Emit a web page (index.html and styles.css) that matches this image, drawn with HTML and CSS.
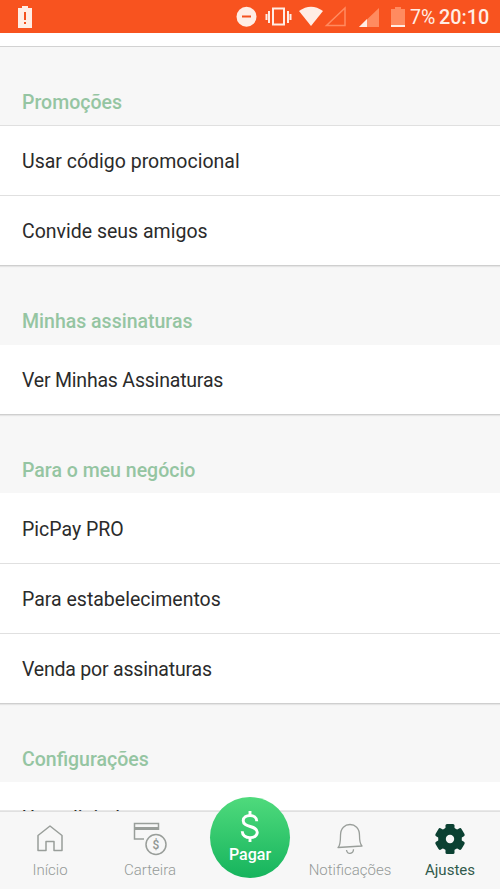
FILE: index.html
```html
<!DOCTYPE html>
<html lang="pt-BR">
<head>
<meta charset="utf-8">
<title>Ajustes</title>
<link rel="stylesheet" href="styles.css">
</head>
<body>
<div class="app">
  <header class="status">
    <svg class="alert" width="16" height="24" viewBox="0 0 16 24"><path fill="#ffede5" d="M1 3h4V1h6v2h4v20H1z"/><path stroke="#f4511e" stroke-width="2" d="M8 7v8M8 17v2"/></svg>
    <svg class="icons" width="175" height="34" viewBox="0 0 175 34">
      <circle cx="11.500" cy="16.700" r="10" fill="#ffede5"/><path d="M7 16.500h9" stroke="#f4511e" stroke-width="2"/>
      <g fill="none" stroke="#ffede5" stroke-width="2"><rect x="38" y="8.500" width="11" height="16"/><path d="M34 11v12M53 11v12M31.500 14v6M55.500 14v6"/></g>
      <path fill="#ffede5" d="M64 11q12-8.500 24 0L76 26z"/>
      <path fill="none" stroke="#ff8b60" stroke-width="1.500" d="M91.500 25.500H110V8z"/>
      <path fill="#ff8b60" d="M124 27h20V8z"/><path fill="#ffede5" d="M124 27h8v-8z"/>
      <path fill="#ff8b60" d="M156 9h4V7h6v2h4v17h-14z"/><path fill="#ffede5" d="M156 25h14v2h-14z"/>
    </svg>
    <span class="percent">7%</span><span class="time">20:10</span>
  </header>
  <main class="list">
    <div class="tail"></div>
    <h2>Promoções</h2>
    <ul class="lined"><li>Usar código promocional</li><li>Convide seus amigos</li></ul>
    <h2 class="tall">Minhas assinaturas</h2>
    <ul><li class="tight">Ver Minhas Assinaturas</li></ul>
    <h2>Para o meu negócio</h2>
    <ul><li class="lead">PicPay PRO</li><li>Para estabelecimentos</li><li class="tight">Venda por assinaturas</li></ul>
    <h2>Configurações</h2>
    <ul><li class="last">Usar digital</li></ul>
  </main>
  <nav class="nav">
    <a><svg width="40" height="36" viewBox="0 0 40 36"><path fill="none" stroke="#999e9a" stroke-width="1.500" stroke-linejoin="round" d="M8 14.500 20 5l12 9.500V29.500h-8v-9h-8v9H8z"/></svg><span>Início</span></a>
    <a><svg width="40" height="36" viewBox="0 0 40 36"><g fill="none" stroke="#999e9a" stroke-width="1.500"><path d="M14 18H4.500V2.500h24V9"/><path stroke-width="3" d="M4.500 7.500h24"/><circle cx="26" cy="23.500" r="10"/></g><text x="26" y="28" class="coin">$</text></svg><span>Carteira</span></a>
    <a class="pay"><span class="disc"><svg class="dollar" width="24" height="34" viewBox="0 0 24 34"><path fill="none" stroke="#fff" stroke-width="3" d="M12 1v5M12 28v5M19 11.500C19 3.500 5 4 5 11c0 7.500 14.500 4.500 14.500 12 0 7.500-15.500 7.500-15.500-1"/></svg><span>Pagar</span></span></a>
    <a><svg width="40" height="36" viewBox="0 0 40 36"><path fill="none" stroke="#999e9a" stroke-width="1.300" stroke-linejoin="round" d="M8 26.500q2.500-2 2.500-12C10.500 7 15 3.500 20 3.500s9.500 3.500 9.500 11c0 6.500.5 8.500 2.500 10.500zM16.500 29c.5 5 7 4 7-.8"/></svg><span>Notificações</span></a>
    <a class="active"><svg width="40" height="36" viewBox="0 0 40 36"><g fill="#0b4132"><circle cx="20" cy="18" r="11.800"/><g id="tooth"><rect x="15.500" y="3" width="9" height="30" rx="1.500"/></g><use href="#tooth" transform="rotate(60 20 18)"/><use href="#tooth" transform="rotate(120 20 18)"/></g><circle cx="20" cy="18" r="4.200" fill="#f7f7f7"/></svg><span>Ajustes</span></a>
  </nav>
</div>
</body>
</html>
```
FILE: styles.css
```css
* { box-sizing: border-box; }
body { margin: 0; font-family: Roboto, "Liberation Sans", sans-serif; }
.app { width: 500px; height: 889px; display: flex; flex-direction: column; overflow: hidden; background: #f7f7f7; }
.status { height: 33px; flex: none; display: flex; align-items: center; background: #f8531f; color: #ffede5; font-size: 20px; }
.alert { margin-left: 17px; }
.icons { margin-left: 202px; flex: none; }
.percent { width: 29px; font-size: 19.5px; padding-top: 1px; }
.time { font-weight: 500; font-size: 19.8px; padding-top: 1px; }
.list { flex: 1; min-height: 0; overflow: hidden; }
.tail { height: 14px; background: #fff; border-bottom: 1px solid #d2d2d2; }
h2 { margin: 0; height: 78px; padding: 44px 22px 0; font-size: 19.5px; line-height: 24px; font-weight: 500; color: #95c5a2; }
.tall { height: 79px; }
ul { margin: 0; padding: 0; list-style: none; background: #fff; border-bottom: 1px solid #cfcfcf; box-shadow: 0 1px 1px #e5e5e5; }
li { height: 70px; padding: 0 22px; line-height: 72px; font-size: 19.5px; color: #2b2b2b; }
li:only-child { height: 69px; line-height: 71px; }
.lined li, li + li { border-top: 1px solid #e0e0e0; }
li + li { line-height: 71px; }
.lead { line-height: 74px; }
li.last:only-child { line-height: 73px; }
.tight { letter-spacing: -0.2px; }
.nav { height: 79px; flex: none; position: relative; margin-top: -1px; display: grid; grid-template-columns: repeat(5, 100px); background: #f7f7f7; background-clip: padding-box; border-top: 2px solid rgba(0, 0, 0, 0.09); }
.nav a { display: flex; flex-direction: column; align-items: center; padding-top: 9px; font-size: 15px; line-height: 26px; font-weight: 300; color: #959a97; }
.nav .active { color: #315a4c; font-weight: 400; }
.coin { font-size: 12px; font-weight: 500; text-anchor: middle; fill: #8f9591; }
.nav .pay { padding: 0; }
.disc { width: 80px; height: 81px; flex: none; margin-top: -15px; border-radius: 50%; display: flex; flex-direction: column; align-items: center; padding-top: 13px; background: linear-gradient(#4fda7c, #16b45d); color: #fff; font-size: 16px; line-height: 24px; font-weight: 500; }
.dollar { height: 33px; flex: none; }
```
